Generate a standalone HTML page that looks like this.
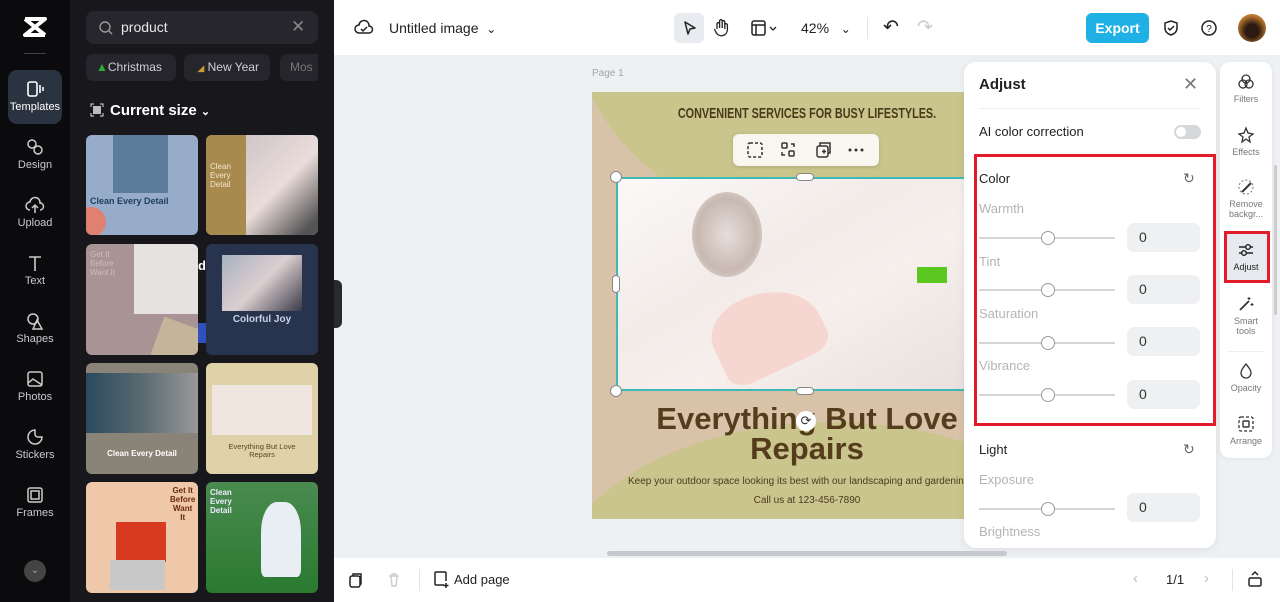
<!DOCTYPE html>
<html style="overflow:hidden"><head><meta charset="utf-8"><style>
*{box-sizing:border-box;margin:0;padding:0}
html,body{overflow:hidden}
body{width:1280px;height:602px;position:relative;font-family:"Liberation Sans",sans-serif;background:#eef1f4}
.a{position:absolute}
.rail{left:0;top:0;width:70px;height:602px;background:#0b0b0e}
.ri{position:absolute;left:0;width:70px;text-align:center;color:#c9c9cf;font-size:11px}
.ri svg{display:block;margin:0 auto 3px}
.panel{left:70px;top:0;width:264px;height:602px;background:#17171c}
.card{position:absolute;border-radius:6px;overflow:hidden}
.chip{position:absolute;top:54px;height:27px;border-radius:7px;background:#25252b;color:#cfcfd4;font-size:12px;line-height:27px;padding-left:10px}
.top{left:334px;top:0;width:946px;height:55px;background:#fff}
.bot{left:334px;top:558px;width:946px;height:44px;background:#fff}
.lbl{position:absolute;left:979px;font-size:13px;color:#b5b5b9}
.sl{position:absolute;left:979px;width:136px;height:2px;background:#d5d5d8}
.kn{position:absolute;left:1041px;width:14px;height:14px;border-radius:50%;background:#fff;border:1.5px solid #9a9aa0}
.vb{position:absolute;left:1127px;width:73px;height:29px;border-radius:7px;background:#eff0f2;font-size:14px;color:#333;line-height:29px;padding-left:12px}
.tb{position:absolute;left:1220px;width:52px;text-align:center;font-size:9px;color:#777;line-height:10px}
.tb svg{display:block;margin:0 auto 3px}
</style></head><body>
<div class="a rail"></div>
<svg class="a" style="left:22px;top:16px" width="26" height="22" viewBox="0 0 26 22"><path d="M3 3h20L3 19h20M3 3l20 16" fill="none" stroke="#fff" stroke-width="4" stroke-linejoin="round"/></svg>
<div class="a" style="left:24px;top:53px;width:22px;height:1px;background:#444"></div>
<div class="a" style="left:8px;top:70px;width:54px;height:54px;border-radius:9px;background:#2a3340"></div>
<div class="ri" style="top:80px;color:#fff"><svg width="22" height="18"><rect x="4" y="2" width="9" height="14" rx="2" fill="none" stroke="#fff" stroke-width="1.6"/><path d="M16 5v8M19 7v4" stroke="#fff" stroke-width="1.6"/></svg>Templates</div>
<div class="ri" style="top:138px"><svg width="20" height="18"><circle cx="7" cy="6" r="4" fill="none" stroke="#ccc" stroke-width="1.5"/><circle cx="13" cy="12" r="4" fill="none" stroke="#ccc" stroke-width="1.5"/></svg>Design</div>
<div class="ri" style="top:196px"><svg width="20" height="18"><path d="M5 14a4 4 0 0 1 0-8 5 5 0 0 1 10 1 3.5 3.5 0 0 1 0 7M10 9v8M7 12l3-3 3 3" fill="none" stroke="#ccc" stroke-width="1.5"/></svg>Upload</div>
<div class="ri" style="top:254px"><svg width="20" height="18"><path d="M4 3h12M10 3v14" stroke="#ccc" stroke-width="1.6"/></svg>Text</div>
<div class="ri" style="top:312px"><svg width="20" height="18"><circle cx="8" cy="7" r="5" fill="none" stroke="#ccc" stroke-width="1.5"/><path d="M12 8l5 9H8z" fill="none" stroke="#ccc" stroke-width="1.5"/></svg>Shapes</div>
<div class="ri" style="top:370px"><svg width="20" height="18"><rect x="3" y="2" width="14" height="14" rx="2" fill="none" stroke="#ccc" stroke-width="1.5"/><path d="M3 13l5-4 9 6" fill="none" stroke="#ccc" stroke-width="1.5"/></svg>Photos</div>
<div class="ri" style="top:428px"><svg width="20" height="18"><path d="M10 2a7 7 0 1 0 7 7h-4a3 3 0 0 1-3-3z" fill="none" stroke="#ccc" stroke-width="1.5"/></svg>Stickers</div>
<div class="ri" style="top:486px"><svg width="20" height="18"><rect x="3" y="2" width="14" height="14" rx="2" fill="none" stroke="#ccc" stroke-width="1.5"/><rect x="6" y="5" width="8" height="8" fill="none" stroke="#ccc" stroke-width="1.5"/></svg>Frames</div>
<div class="a" style="left:24px;top:560px;width:22px;height:22px;border-radius:50%;background:#444;color:#aaa;font-size:10px;text-align:center;line-height:22px">&#8964;</div>

<div class="a panel"></div>
<div class="a" style="left:86px;top:11px;width:232px;height:33px;border-radius:8px;background:#26262c"></div>
<svg class="a" style="left:98px;top:20px" width="16" height="16"><circle cx="7" cy="7" r="5" fill="none" stroke="#999" stroke-width="1.4"/><path d="M11 11l3 3" stroke="#999" stroke-width="1.4"/></svg>
<div class="a" style="left:121px;top:19px;color:#e8e8ea;font-size:14px">product</div>
<div class="a" style="left:291px;top:17px;color:#888;font-size:17px">✕</div>
<div class="chip" style="left:86px;width:90px"><span style="color:#3a3">▲</span>Christmas</div>
<div class="chip" style="left:184px;width:86px">&nbsp;<span style="color:#c93;font-size:9px">◢</span> New Year</div>
<div class="chip" style="left:280px;width:38px;color:#777;border-radius:7px 0 0 7px">Mos</div>
<svg class="a" style="left:90px;top:103px" width="14" height="14"><rect x="3" y="3" width="8" height="8" fill="#bbb"/><path d="M1 4V1h3M10 1h3v3M13 10v3h-3M4 13H1v-3" fill="none" stroke="#bbb" stroke-width="1.2"/></svg>
<div class="a" style="left:110px;top:102px;color:#fff;font-size:15px;font-weight:bold">Current size <span style="font-size:11px">&#8964;</span></div>

<div class="card" style="left:86px;top:135px;width:112px;height:100px;background:#97acc8"><div class="a" style="left:27px;top:0;width:55px;height:58px;background:#5c7c9c"></div><div class="a" style="left:-10px;top:72px;width:30px;height:30px;border-radius:50%;background:#e08070"></div><div class="a" style="left:4px;top:61px;font-size:9px;font-weight:bold;color:#1e3c5e;width:110px">Clean Every Detail</div></div>
<div class="card" style="left:206px;top:135px;width:112px;height:100px;background:#d8c8c8"><div class="a" style="left:0;top:0;width:40px;height:100px;background:#a8894e"></div><div class="a" style="left:40px;top:0;width:72px;height:100px;background:linear-gradient(135deg,#cfc6c8,#eadcda 50%,#555 90%)"></div><div class="a" style="left:4px;top:27px;font-size:8px;color:#f3e8cc;line-height:9px">Clean<br>Every<br>Detail</div></div>
<div class="card" style="left:86px;top:244px;width:112px;height:111px;background:#a89494"><div class="a" style="left:48px;top:0;width:64px;height:70px;background:#e6e2e2"></div><div class="a" style="left:4px;top:6px;font-size:8px;color:#d0bcbc;line-height:9px">Get It<br>Before<br>Want It</div><div class="a" style="left:70px;top:80px;width:50px;height:40px;background:#c4b49a;transform:rotate(20deg)"></div></div>
<div class="a" style="left:198px;top:258px;font-size:13px;color:#fff;font-weight:bold">d</div>
<div class="a" style="left:198px;top:323px;width:8px;height:20px;background:#3050c0"></div>
<div class="card" style="left:206px;top:244px;width:112px;height:111px;background:#28344e"><div class="a" style="left:16px;top:11px;width:80px;height:56px;background:linear-gradient(135deg,#a8b0c0,#dccfd0 50%,#3a3a48)"></div><div class="a" style="left:0;top:70px;width:112px;text-align:center;font-size:10px;font-weight:bold;color:#c8d2e8">Colorful Joy</div></div>
<div class="card" style="left:86px;top:363px;width:112px;height:111px;background:#8a8478"><div class="a" style="left:0;top:10px;width:112px;height:60px;background:linear-gradient(90deg,#2a4a60,#5a6a70,#999)"></div><div class="a" style="left:0;top:86px;width:112px;text-align:center;font-size:8px;font-weight:bold;color:#fff">Clean Every Detail</div></div>
<div class="card" style="left:206px;top:363px;width:112px;height:111px;background:#e0d2a8"><div class="a" style="left:6px;top:22px;width:100px;height:50px;background:#efe6e0"></div><div class="a" style="left:0;top:80px;width:112px;text-align:center;font-size:7.5px;color:#5a4620;line-height:8px">Everything But Love<br>Repairs</div></div>
<div class="card" style="left:86px;top:482px;width:112px;height:111px;background:#eec8a8"><div class="a" style="left:30px;top:40px;width:50px;height:40px;background:#d83a20"></div><div class="a" style="left:24px;top:78px;width:55px;height:30px;background:#c8c8c8"></div><div class="a" style="left:84px;top:4px;font-size:8px;font-weight:bold;color:#6a2a10;line-height:9px;text-align:center">Get It<br>Before<br>Want<br>It</div></div>
<div class="card" style="left:206px;top:482px;width:112px;height:111px;background:linear-gradient(#4a8a50,#2a7a30)"><div class="a" style="left:55px;top:20px;width:40px;height:75px;background:#e8eef4;border-radius:40% 40% 10% 10%"></div><div class="a" style="left:4px;top:6px;font-size:8px;font-weight:bold;color:#eef;line-height:9px">Clean<br>Every<br>Detail</div></div>

<div class="a" style="left:334px;top:280px;width:8px;height:48px;background:#2a2a2e;border-radius:0 6px 6px 0"></div>

<div class="a top"></div>
<svg class="a" style="left:354px;top:19px" width="20" height="18"><path d="M5 14a4 4 0 0 1 0-8 5 5 0 0 1 10 1 3.5 3.5 0 0 1 0 7z M7 10l2 2 4-4" fill="none" stroke="#222" stroke-width="1.5"/></svg>
<div class="a" style="left:389px;top:20px;font-size:14px;color:#222">Untitled image &nbsp;<span style="font-size:12px">&#8964;</span></div>
<div class="a" style="left:674px;top:13px;width:30px;height:30px;border-radius:6px;background:#e8ebef"></div>
<svg class="a" style="left:680px;top:19px" width="18" height="18"><path d="M5 3l10 6-5 1-2 5z" fill="none" stroke="#222" stroke-width="1.5" stroke-linejoin="round"/></svg>
<svg class="a" style="left:712px;top:18px" width="18" height="20"><path d="M5 11V6a1.3 1.3 0 0 1 2.6 0v4V3a1.3 1.3 0 0 1 2.6 0v7V4a1.3 1.3 0 0 1 2.6 0v7V7a1.3 1.3 0 0 1 2.6 0v5a6 6 0 0 1-11 3l-2-4" fill="none" stroke="#222" stroke-width="1.3"/></svg>
<svg class="a" style="left:750px;top:19px" width="30" height="18"><rect x="2" y="2" width="13" height="14" rx="2" fill="none" stroke="#222" stroke-width="1.5"/><path d="M2 6h13M6 6v10" stroke="#222" stroke-width="1.5"/><path d="M20 8l3 3 3-3" fill="none" stroke="#222" stroke-width="1.3"/></svg>
<div class="a" style="left:801px;top:20px;font-size:14px;color:#222">42% &nbsp;&nbsp;<span style="font-size:12px">&#8964;</span></div>
<div class="a" style="left:867px;top:17px;width:1px;height:22px;background:#e4e4e4"></div>
<div class="a" style="left:883px;top:16px;font-size:19px;color:#222">↶</div>
<div class="a" style="left:917px;top:16px;font-size:19px;color:#ccc">↷</div>
<div class="a" style="left:1086px;top:13px;width:63px;height:30px;border-radius:6px;background:#1fb1e6;color:#fff;font-size:14px;font-weight:bold;text-align:center;line-height:30px">Export</div>
<svg class="a" style="left:1162px;top:19px" width="18" height="18"><path d="M9 2l6 2v5c0 4-3 6-6 7-3-1-6-3-6-7V4z M6 9l2 2 4-4" fill="none" stroke="#222" stroke-width="1.5"/></svg>
<svg class="a" style="left:1200px;top:19px" width="18" height="18"><circle cx="9" cy="9" r="7" fill="none" stroke="#222" stroke-width="1.5"/><text x="9" y="13" font-size="10" text-anchor="middle" fill="#222" font-family="Liberation Sans">?</text></svg>
<div class="a" style="left:1238px;top:14px;width:28px;height:28px;border-radius:50%;background:radial-gradient(circle at 50% 60%,#2a1a10 30%,#c07a30 70%)"></div>

<div class="a" style="left:592px;top:68px;font-size:10px;color:#a0a4aa">Page 1</div>
<div class="a" style="left:592px;top:92px;width:372px;height:427px;background:#d8c2a8;overflow:hidden">
 <div class="a" style="left:-20px;top:-300px;width:520px;height:440px;border-radius:50%;background:#cac58c"></div>
 <div class="a" style="left:-40px;top:330px;width:560px;height:340px;border-radius:50%;background:#cac58c"></div>
 <div class="a" style="left:0;top:13px;width:430px;text-align:center;font-size:15px;font-weight:bold;color:#4a3a1c;transform:scaleX(.72);transform-origin:50% 0">CONVENIENT SERVICES FOR BUSY LIFESTYLES.</div>
 <div class="a" style="left:24px;top:86px;width:360px;height:212px;background:linear-gradient(150deg,#fbf9f8,#f2ebe8 40%,#f6efec 60%,#e8e0dc);"></div>
 <div class="a" style="left:100px;top:100px;width:70px;height:85px;border-radius:50%;background:radial-gradient(#e6dedb,#c8b8b2 60%,#efe8e4)"></div>
 <div class="a" style="left:120px;top:200px;width:110px;height:80px;border-radius:40% 60% 20% 20%;background:#f6d6d0;transform:rotate(-25deg)"></div>
 <div class="a" style="left:325px;top:175px;width:30px;height:16px;background:#5ac820"></div>
 <div class="a" style="left:0;top:312px;width:430px;text-align:center;font-size:31px;font-weight:bold;color:#553c1c;line-height:30px">Everything But Love<br>Repairs</div>
 <div class="a" style="left:36px;top:384px;width:420px;font-size:10px;color:#4a3a22;white-space:nowrap">Keep your outdoor space looking its best with our landscaping and gardening services</div>
 <div class="a" style="left:0;top:403px;width:430px;text-align:center;font-size:10px;color:#4a3a22">Call us at 123-456-7890</div>
</div>
<div class="a" style="left:616px;top:177px;width:348px;height:214px;border:2px solid #3fb8b8;border-right:none"></div>
<div class="a" style="left:610px;top:171px;width:12px;height:12px;border-radius:50%;background:#fff;border:1px solid #888"></div>
<div class="a" style="left:610px;top:385px;width:12px;height:12px;border-radius:50%;background:#fff;border:1px solid #888"></div>
<div class="a" style="left:796px;top:173px;width:18px;height:8px;border-radius:4px;background:#fff;border:1px solid #888"></div>
<div class="a" style="left:796px;top:387px;width:18px;height:8px;border-radius:4px;background:#fff;border:1px solid #888"></div>
<div class="a" style="left:612px;top:275px;width:8px;height:18px;border-radius:4px;background:#fff;border:1px solid #888"></div>
<div class="a" style="left:796px;top:411px;width:20px;height:20px;border-radius:50%;background:#fff;font-size:13px;text-align:center;line-height:20px;color:#333">⟳</div>
<div class="a" style="left:733px;top:134px;width:146px;height:32px;border-radius:6px;background:#f8f6ee;box-shadow:0 1px 4px rgba(0,0,0,.15)"></div>
<svg class="a" style="left:746px;top:141px" width="120" height="18"><rect x="2" y="2" width="14" height="14" rx="2" fill="none" stroke="#333" stroke-width="1.5" stroke-dasharray="3 2"/><rect x="36" y="2" width="5" height="5" rx="1" fill="none" stroke="#333" stroke-width="1.5"/><rect x="43" y="10" width="5" height="5" rx="1" fill="none" stroke="#333" stroke-width="1.5"/><path d="M36 11v3h3M48 6V3h-3" fill="none" stroke="#333" stroke-width="1.5"/><rect x="71" y="5" width="11" height="11" rx="2" fill="none" stroke="#333" stroke-width="1.5"/><path d="M74 5V2h10v10h-2M76 10.5h4M78 8.5v4" fill="none" stroke="#333" stroke-width="1.5"/><circle cx="104" cy="9" r="1.5" fill="#333"/><circle cx="110" cy="9" r="1.5" fill="#333"/><circle cx="116" cy="9" r="1.5" fill="#333"/></svg>

<div class="a" style="left:964px;top:62px;width:252px;height:486px;border-radius:12px;background:#fff;box-shadow:0 2px 8px rgba(0,0,0,.08)"></div>
<div class="a" style="left:979px;top:76px;font-size:15px;font-weight:bold;color:#222">Adjust</div>
<div class="a" style="left:1183px;top:74px;font-size:18px;color:#777">✕</div>
<div class="a" style="left:979px;top:108px;width:222px;height:1px;background:#eee"></div>
<div class="a" style="left:979px;top:124px;font-size:13px;color:#222">AI color correction</div>
<div class="a" style="left:1174px;top:125px;width:27px;height:14px;border-radius:7px;background:#d5d7da"></div>
<div class="a" style="left:1176px;top:127px;width:10px;height:10px;border-radius:50%;background:#fff"></div>
<div class="a" style="left:974px;top:154px;width:242px;height:272px;border:3px solid #e21a2a"></div>
<div class="a" style="left:979px;top:171px;font-size:13px;color:#222">Color</div>
<div class="a" style="left:1183px;top:170px;font-size:14px;color:#666">↻</div>
<div class="lbl" style="top:201px">Warmth</div><div class="sl" style="top:237px"></div><div class="kn" style="top:231px"></div><div class="vb" style="top:223px">0</div>
<div class="lbl" style="top:254px">Tint</div><div class="sl" style="top:289px"></div><div class="kn" style="top:283px"></div><div class="vb" style="top:275px">0</div>
<div class="lbl" style="top:306px">Saturation</div><div class="sl" style="top:342px"></div><div class="kn" style="top:336px"></div><div class="vb" style="top:327px">0</div>
<div class="lbl" style="top:358px">Vibrance</div><div class="sl" style="top:394px"></div><div class="kn" style="top:388px"></div><div class="vb" style="top:380px">0</div>
<div class="a" style="left:979px;top:442px;font-size:13px;color:#222">Light</div>
<div class="a" style="left:1183px;top:441px;font-size:14px;color:#666">↻</div>
<div class="lbl" style="top:472px">Exposure</div><div class="sl" style="top:508px"></div><div class="kn" style="top:502px"></div><div class="vb" style="top:493px">0</div>
<div class="lbl" style="top:524px">Brightness</div>

<div class="a" style="left:1220px;top:62px;width:52px;height:396px;border-radius:10px;background:#fff;box-shadow:0 1px 6px rgba(0,0,0,.06)"></div>
<div class="a" style="left:1274px;top:165px;width:3px;height:150px;border-radius:2px;background:#ccc"></div>
<div class="tb" style="top:73px"><svg width="18" height="18"><circle cx="9" cy="6" r="4" fill="none" stroke="#333" stroke-width="1.3"/><circle cx="6" cy="11" r="4" fill="none" stroke="#333" stroke-width="1.3"/><circle cx="12" cy="11" r="4" fill="none" stroke="#333" stroke-width="1.3"/></svg>Filters</div>
<div class="tb" style="top:126px"><svg width="18" height="18"><path d="M9 2l2 5 5 1-4 3 1 5-4-3-4 3 1-5-4-3 5-1z" fill="none" stroke="#333" stroke-width="1.3"/></svg>Effects</div>
<div class="tb" style="top:178px"><svg width="18" height="18"><circle cx="9" cy="9" r="7" fill="none" stroke="#888" stroke-width="1.2" stroke-dasharray="2 2"/><path d="M5 14l9-9" stroke="#333" stroke-width="2"/></svg>Remove<br>backgr...</div>
<div class="a" style="left:1224px;top:231px;width:46px;height:52px;border:3px solid #e21a2a;background:#e6e9ee"></div>
<div class="tb" style="top:241px;color:#222"><svg width="18" height="18"><path d="M2 6h14M2 12h14" stroke="#222" stroke-width="1.4"/><circle cx="11" cy="6" r="2.3" fill="#e6e9ee" stroke="#222" stroke-width="1.4"/><circle cx="7" cy="12" r="2.3" fill="#e6e9ee" stroke="#222" stroke-width="1.4"/></svg>Adjust</div>
<div class="tb" style="top:295px"><svg width="18" height="18"><path d="M3 15l9-9" stroke="#333" stroke-width="1.8"/><path d="M12 2v3M10.5 3.5h3M15 8v3M13.5 9.5h3" stroke="#333" stroke-width="1.1"/></svg>Smart<br>tools</div>
<div class="a" style="left:1228px;top:351px;width:36px;height:1px;background:#eee"></div>
<div class="tb" style="top:362px"><svg width="18" height="18"><path d="M9 2c3 4 5 6 5 9a5 5 0 0 1-10 0c0-3 2-5 5-9z" fill="none" stroke="#333" stroke-width="1.3"/></svg>Opacity</div>
<div class="tb" style="top:415px"><svg width="18" height="18"><rect x="2" y="2" width="14" height="14" rx="2" fill="none" stroke="#333" stroke-width="1.3" stroke-dasharray="3 2"/><rect x="6" y="6" width="6" height="6" rx="1" fill="none" stroke="#333" stroke-width="1.4"/></svg>Arrange</div>

<div class="a" style="left:607px;top:551px;width:400px;height:5px;border-radius:3px;background:#c5c9ce"></div>
<div class="a bot"></div>
<svg class="a" style="left:347px;top:571px" width="18" height="18"><rect x="3" y="5" width="10" height="11" rx="2" fill="none" stroke="#222" stroke-width="1.5"/><path d="M6 5V3h8v10h-1" fill="none" stroke="#222" stroke-width="1.5"/></svg>
<svg class="a" style="left:386px;top:571px" width="16" height="18"><path d="M3 5h10M5 5l1 10h4l1-10M6 5V3h4v2" fill="none" stroke="#ccc" stroke-width="1.4"/></svg>
<div class="a" style="left:419px;top:569px;width:1px;height:22px;background:#e4e4e4"></div>
<svg class="a" style="left:432px;top:570px" width="18" height="18"><path d="M12 15H4a1 1 0 0 1-1-1V3a1 1 0 0 1 1-1h9a1 1 0 0 1 1 1v8M14 13v5M11.5 15.5h5" fill="none" stroke="#222" stroke-width="1.5"/></svg>
<div class="a" style="left:454px;top:572px;font-size:13px;color:#222">Add page</div>
<div class="a" style="left:1133px;top:570px;font-size:15px;color:#bbb">‹</div>
<div class="a" style="left:1166px;top:572px;font-size:13px;color:#222">1/1</div>
<div class="a" style="left:1204px;top:570px;font-size:15px;color:#bbb">›</div>
<div class="a" style="left:1232px;top:569px;width:1px;height:22px;background:#e4e4e4"></div>
<svg class="a" style="left:1246px;top:570px" width="18" height="18"><rect x="3" y="8" width="12" height="8" rx="1.5" fill="none" stroke="#222" stroke-width="1.5"/><path d="M6 5l3-3 3 3" fill="none" stroke="#222" stroke-width="1.5"/></svg>
</body></html>
